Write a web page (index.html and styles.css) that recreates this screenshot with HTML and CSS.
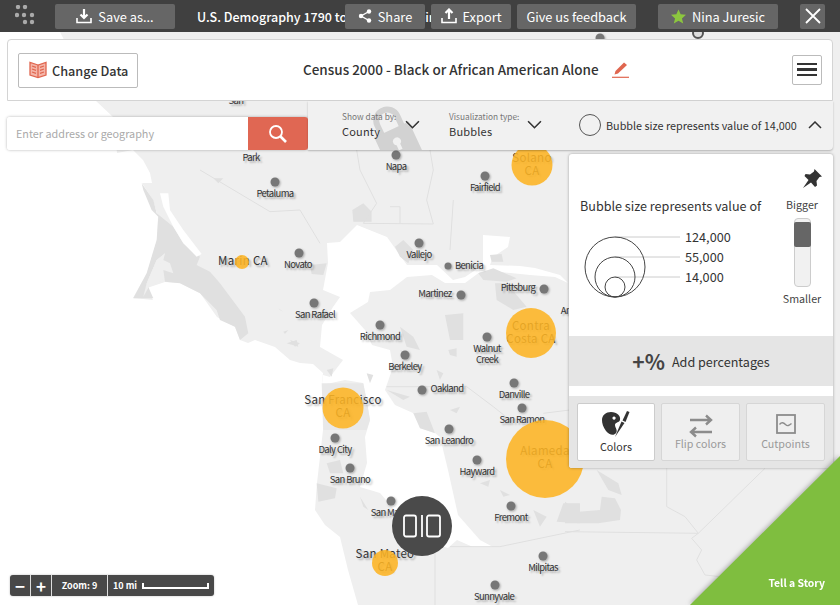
FILE: index.html
```html
<!DOCTYPE html>
<html lang="en">
<head>
    <meta charset="UTF-8">
    <title>Census 2000 - Black or African American Alone</title>
    <link rel="stylesheet" href="styles.css">
</head>
<body>
    <!-- map canvas, same coordinates as the page -->
    <svg class="map" viewBox="0 0 840 605" width="840" height="605">
        <path class="land" d="M60 32 95 100 113 117 117 153 133 150 143 160 150 173 152 183 142 183 153 200 158 217 157 240 147 273 133 298 153 300 147 288 165 282 180 283 200 293 217 317 235 327 240 340 248 343 255 340 275 347 290 360 300 363 313 364 323 373 322 385 323 430 317 483 315 510 325 525 340 537 348 570 358 605 840 605 840 32Z"/>
        <path class="water" d="M327 243 340 242 357 225 387 237 407 265 407 277 390 290 370 292 368 302 350 313 365 330 372 345 390 350 393 367 385 390 395 405 413 413 425 425 440 437 448 470 458 515 480 540 493 547 473 547 457 540 448 548 420 540 380 493 360 487 367 463 365 437 370 420 363 383 345 380 322 385 323 375 330 377 343 360 320 347 322 325 333 307 340 297 323 290 328 263Z"/>
        <path class="water" d="M407 265 437 265 453 280 465 277 483 265 483 235 510 237 508 247 493 257 490 265 520 266 535 268 560 275 568 283 555 277 530 275 500 272 480 272 465 283 445 283 432 275 407 277Z"/>

        <!-- Point Reyes, zoomed coordinates -->
        <g transform="translate(0 150) scale(.3333)">
            <path class="urban" d="M425 100 460 150 470 190 520 230 550 280 600 320 590 345 630 365 660 400 735 500 745 550 720 570 705 530 660 510 650 480 600 430 540 400 495 395 490 360 520 370 510 340 490 330 495 310 470 330 440 400 460 445 400 445 440 370 470 270 475 200 455 180 430 120Z"/>
            <path class="land" d="M495 310 470 330 440 400 430 440 450 405 490 392 470 360 485 335Z"/>
            <path class="water" d="M480 130 505 130 510 180 550 240 605 312 590 320 550 280 520 230 490 170Z"/>
            <path class="urban" d="M835 475 850 485 840 480ZM850 545 865 540 855 552ZM860 580 890 570 895 590Z"/>
        </g>
        <!-- north bay -->
        <g transform="translate(200 150) scale(.3333)">
            <path class="urban" d="M457 180 490 160 515 185 515 215 460 215ZM585 290 610 270 640 300 625 340 600 320ZM835 370 880 355 950 385 920 395 850 390ZM885 400 920 400 980 470 940 480 890 450ZM735 495 790 490 790 570 750 570ZM40 85 70 85 55 100ZM870 315 905 312 910 335 875 335ZM600 530 640 560 660 600 620 590ZM330 345 380 340 370 375 335 372Z"/>
            <path class="border" d="M0 60 210 185 300 180 360 280M470 0 480 60 530 160 490 220 700 222 680 150 700 60 690 0M760 150 750 300M600 220 600 170 570 170"/>
        </g>
        <!-- central and south bay -->
        <g transform="translate(280 340) scale(.3333)">
            <path class="city-limit" d="M125 130 250 130 262 190 270 240 260 270 130 270Z"/>
            <path class="urban" d="M400 220 440 215 465 280 420 265ZM850 490 900 490 900 550 830 545ZM760 510 800 530 780 560ZM110 430 170 445 165 475 115 485ZM140 370 180 360 190 400 150 400ZM510 210 540 200 530 220ZM240 470 265 510 250 500ZM660 450 690 465 670 470ZM505 30 530 25 530 50 510 45ZM140 90 160 85 155 110ZM30 0 60 10 45 20ZM260 100 280 105 270 130ZM320 150 390 170 370 180ZM600 430 630 420 625 440ZM360 30 390 40 380 60ZM470 90 490 100 480 120Z"/>
            <path class="border" d="M465 640 465 795M510 620 660 620 900 570M320 140 560 140 640 200 690 240M790 220 870 210"/>
        </g>
        <!-- south east -->
        <g transform="translate(565 320) scale(.3333)">
            <path class="urban" d="M95 450 160 490 170 525 130 510ZM0 545 40 575 105 570 110 530 150 535 168 570 165 600 100 610 30 610 0 610Z"/>
            <path class="border" d="M305 445 305 560 360 590 400 640 0 635M400 640 600 445M400 640 380 655 410 690 395 720 420 765 465 770"/>
        </g>

        <!-- cities -->
        <g class="cities">
            <text class="city" x="181" y="46">Sonoma</text>
            <text class="city" x="236" y="104">San</text>
            <text class="city" x="251" y="161">Park</text>
            <circle class="pin" cx="600" cy="38" r="4.500"/>
            <circle class="pin" cx="396" cy="155" r="4.500"/>
            <text class="city" x="396" y="170">Napa</text>
            <circle class="pin" cx="275" cy="182" r="4.500"/>
            <text class="city" x="275" y="197">Petaluma</text>
            <circle class="pin" cx="485" cy="176" r="4.500"/>
            <text class="city" x="485" y="191">Fairfield</text>
            <circle class="pin" cx="299" cy="253" r="4.500"/>
            <text class="city" x="298" y="268">Novato</text>
            <circle class="pin" cx="419" cy="243" r="4.500"/>
            <text class="city" x="419" y="258">Vallejo</text>
            <circle class="pin" cx="448" cy="266" r="3.500"/>
            <text class="city" x="469" y="269">Benicia</text>
            <circle class="pin" cx="461" cy="295" r="4.500"/>
            <text class="city" x="435" y="297">Martinez</text>
            <circle class="pin" cx="544" cy="289" r="4.500"/>
            <text class="city" x="518" y="291">Pittsburg</text>
            <circle class="pin" cx="314" cy="303" r="4.500"/>
            <text class="city" x="315" y="318">San Rafael</text>
            <circle class="pin" cx="380" cy="325" r="4.500"/>
            <text class="city" x="380" y="340">Richmond</text>
            <text class="city" x="566" y="314">An</text>
            <circle class="pin" cx="487" cy="337" r="4.500"/>
            <text class="city" x="487" y="352">Walnut</text>
            <text class="city" x="487" y="363">Creek</text>
            <circle class="pin" cx="405" cy="355" r="4.500"/>
            <text class="city" x="405" y="370">Berkeley</text>
            <circle class="pin" cx="422" cy="390" r="4.500"/>
            <text class="city" x="447" y="392">Oakland</text>
            <circle class="pin" cx="514" cy="383" r="4.500"/>
            <text class="city" x="514" y="398">Danville</text>
            <circle class="pin" cx="522" cy="408" r="4.500"/>
            <text class="city" x="522" y="423">San Ramon</text>
            <circle class="pin" cx="449" cy="429" r="4.500"/>
            <text class="city" x="449" y="444">San Leandro</text>
            <circle class="pin" cx="477" cy="460" r="4.500"/>
            <text class="city" x="477" y="475">Hayward</text>
            <circle class="pin" cx="335" cy="438" r="4.500"/>
            <text class="city" x="335" y="453">Daly City</text>
            <circle class="pin" cx="350" cy="468" r="4.500"/>
            <text class="city" x="350" y="483">San Bruno</text>
            <circle class="pin" cx="391" cy="501" r="4.500"/>
            <text class="city" x="391" y="516">San Mateo</text>
            <circle class="pin" cx="511" cy="506" r="4.500"/>
            <text class="city" x="511" y="521">Fremont</text>
            <circle class="pin" cx="543" cy="556" r="4.500"/>
            <text class="city" x="543" y="571">Milpitas</text>
            <circle class="pin" cx="495" cy="585" r="4.500"/>
            <text class="city" x="494" y="600">Sunnyvale</text>
            <circle class="capital" cx="698" cy="33" r="5"/>
        </g>

        <!-- counties, bubbles go over their labels -->
        <g class="counties">
            <text class="county" x="532" y="162">Solano</text>
            <text class="county" x="532" y="175">CA</text>
            <text class="county" x="243" y="265">Marin CA</text>
            <text class="county" x="531" y="330">Contra</text>
            <text class="county" x="531" y="343">Costa CA</text>
            <text class="county" x="343" y="404">San Francisco</text>
            <text class="county" x="343" y="417">CA</text>
            <text class="county" x="545" y="455">Alameda</text>
            <text class="county" x="545" y="468">CA</text>
            <text class="county" x="385" y="558">San Mateo</text>
            <text class="county" x="385" y="571">CA</text>
        </g>
        <circle class="bubble" cx="532" cy="165" r="20.500"/>
        <circle class="bubble" cx="242" cy="262" r="7"/>
        <circle class="bubble" cx="531" cy="333" r="25"/>
        <circle class="bubble" cx="343" cy="408" r="20.500"/>
        <circle class="bubble" cx="545" cy="459" r="39"/>
        <circle class="bubble" cx="385" cy="563" r="13"/>
    </svg>

    <header class="topbar">
        <button class="dots">
            <svg viewBox="0 0 20 20" width="20" height="20">
                <circle cx="3" cy="2" r="2.200"/><circle cx="10" cy="2" r="2.200"/>
                <circle cx="2" cy="10" r="2.200"/><circle cx="9" cy="10" r="2.200"/><circle cx="17" cy="10" r="2.200"/>
                <circle cx="10" cy="17" r="2.200"/><circle cx="17" cy="17" r="2.200"/>
            </svg>
        </button>
        <button class="bar-btn save">
            <svg class="icon" viewBox="0 0 16 16" width="16" height="16"><path d="M8 1v9M4.500 6.500 8 10l3.500-3.500" fill="none" stroke="#fff" stroke-width="2.200"/><path d="M1 10v4.500h14V10" fill="none" stroke="#fff" stroke-width="1.600"/></svg>
            Save as...
        </button>
        <div class="doc-title">U.S. Demography 1790 to Present: Their</div>
        <button class="bar-btn share">
            <svg class="icon" viewBox="0 0 14 14" width="14" height="14"><path d="M11 2.500 3 7l8 4.500" fill="none" stroke="#fff" stroke-width="1.400"/><circle cx="11" cy="2.500" r="2.200" fill="#fff"/><circle cx="3" cy="7" r="2.200" fill="#fff"/><circle cx="11" cy="11.500" r="2.200" fill="#fff"/></svg>
            Share
        </button>
        <button class="bar-btn export">
            <svg class="icon" viewBox="0 0 16 16" width="16" height="16"><path d="M8 11V2M4.500 5 8 1.500 11.500 5" fill="none" stroke="#fff" stroke-width="2.200"/><path d="M1 10v4.500h14V10" fill="none" stroke="#fff" stroke-width="1.600"/></svg>
            Export
        </button>
        <button class="bar-btn feedback">Give us feedback</button>
        <button class="bar-btn user">
            <svg class="icon" viewBox="0 0 16 16" width="15" height="15"><path fill="#8cc63f" d="M8 .5 10.300 5.700 16 6.200 11.700 10 13 15.500 8 12.600 3 15.500 4.300 10 0 6.200 5.700 5.700Z"/></svg>
            Nina Juresic
        </button>
        <button class="bar-btn close">
            <svg viewBox="0 0 16 16" width="16" height="16"><path d="M1 1 15 15M15 1 1 15" stroke="#fff" stroke-width="1.800"/></svg>
        </button>
    </header>

    <section class="controls">
        <div class="card">
            <button class="change-data">
                <svg viewBox="0 0 18 18" width="18" height="18" fill="none" stroke="#e0664f" stroke-width="1.300">
                    <path d="M9 4 1 1.500v12.500L9 16.500 17 14V1.500Z" fill="#f4b5a8"/>
                    <path d="M9 4v12.500M3 5l4 1.300M3 8l4 1.300M3 11l4 1.300M15 5l-4 1.300M15 8l-4 1.300M15 11l-4 1.300"/>
                </svg>
                Change Data
            </button>
            <h1 class="data-title">Census 2000 - Black or African American Alone</h1>
            <svg class="pencil" viewBox="0 0 17 17" width="17" height="17">
                <path fill="#e0664f" d="M12 1.500 15 4 6 12.500 2.500 13.500 3.500 10Z"/>
                <path stroke="#e0664f" stroke-width="1.200" d="M0 16.300h17"/>
            </svg>
            <button class="menu"><span></span><span></span><span></span></button>
        </div>
        <div class="subrow">
            <form class="search">
                <input class="search-input" placeholder="Enter address or geography">
                <button class="search-btn" type="button">
                    <svg viewBox="0 0 20 20" width="20" height="20" fill="none" stroke="#fff"><circle cx="8" cy="8" r="6" stroke-width="1.800"/><path d="M12.500 12.500 18 18" stroke-width="2.600"/></svg>
                </button>
            </form>
            <div class="options">
                <svg class="lock" viewBox="0 0 44 60" width="44" height="60">
                    <path d="M11 26V14a11 11 0 0 1 22 0v12" fill="none" stroke="#d2d2d2" stroke-width="6"/>
                    <path fill="#d2d2d2" fill-rule="evenodd" d="M3 24h38v36H3ZM22 33a4 4 0 0 0-2 7.500V46h4v-5.500A4 4 0 0 0 22 33Z"/>
                </svg>
                <div class="picker county-pick">
                    <label>Show data by:</label>
                    <span>County</span>
                    <svg class="chev" viewBox="0 0 14 8" width="15" height="9"><path d="M1 1 7 7 13 1" fill="none" stroke="#333" stroke-width="1.500"/></svg>
                </div>
                <div class="picker type-pick">
                    <label>Visualization type:</label>
                    <span>Bubbles</span>
                    <svg class="chev" viewBox="0 0 14 8" width="15" height="9"><path d="M1 1 7 7 13 1" fill="none" stroke="#333" stroke-width="1.500"/></svg>
                </div>
                <div class="bubble-note">
                    <i class="ring"></i>
                    Bubble size represents value of 14,000
                    <svg class="chev-up" viewBox="0 0 14 8" width="14" height="8"><path d="M1 7 7 1 13 7" fill="none" stroke="#333" stroke-width="1.500"/></svg>
                </div>
            </div>
        </div>
    </section>

    <aside class="legend">
        <div class="legend-top">
            <div class="legend-left">
                <h2>Bubble size represents value of</h2>
                <svg class="scale" viewBox="0 0 160 70" width="160" height="70">
                    <path class="leader" d="M35 5H100M35 25H100M35 45H100"/>
                    <circle class="ring-line" cx="35" cy="35" r="30"/>
                    <circle class="ring-line" cx="35" cy="45" r="20"/>
                    <circle class="ring-line" cx="35" cy="55" r="10"/>
                    <text x="105" y="9.500">124,000</text>
                    <text x="105" y="29.500">55,000</text>
                    <text x="105" y="49.500">14,000</text>
                </svg>
            </div>
            <div class="sizer">
                <svg class="pushpin" viewBox="0 0 20 20" width="20" height="20"><path fill="#333" d="M12.500 0 20 7.500 17.500 8 14.500 12 15 16.500 13 18 9 13.500 1 19 6.500 11 2.500 7 3.500 5 8 5.500 12 2.500Z"/></svg>
                <span>Bigger</span>
                <div class="track"><div class="thumb"></div></div>
                <span>Smaller</span>
            </div>
        </div>
        <div class="add-pct"><b>+%</b> Add percentages</div>
        <div class="tools">
            <button class="tool on">
                <svg viewBox="0 0 30 30" width="30" height="30">
                    <path fill="#333" fill-rule="evenodd" d="M10 3C16 3 20 7 19 11 18 14 14 13 14 16 14 19 17 21 15 24 13 27 8 26 5 22 2 18 1 14 1 11 1 6 5 3 10 3ZM13 7.500a1.600 1.600 0 1 0 .1 0Z"/>
                    <path fill="#333" d="M14 28 20.500 12.500 23.500 14Z"/>
                    <path fill="#333" d="M21.500 11.500 26 2 28.500 3 24.500 13Z"/>
                </svg>
                Colors
            </button>
            <button class="tool">
                <svg class="flip" viewBox="0 0 24 24" width="24" height="24" fill="none" stroke="#8c8c8c" stroke-width="2.400"><path d="M1 6h21M17 1.500 22 6l-5 4.500"/><path d="M23 18H2M7 13.500 2 18l5 4.500"/></svg>
                Flip colors
            </button>
            <button class="tool">
                <svg class="cuts" viewBox="0 0 20 20" width="20" height="20" fill="none" stroke="#8c8c8c"><rect x="1" y="1" width="18" height="18" stroke-width="1.800"/><path d="M3.500 10.500c2-2.500 4-2 6 0s3.500 1 6-1" stroke-width="1.400"/></svg>
                Cutpoints
            </button>
        </div>
    </aside>

    <div class="zoombar">
        <button class="zoom-btn">−</button>
        <button class="zoom-btn">+</button>
        <span class="zoom-level">Zoom: 9</span>
        <span class="zoom-scale">10 mi <i class="scale-line"></i></span>
    </div>

    <button class="splitter">
        <svg viewBox="0 0 38 24" width="38" height="24" fill="none" stroke="#fff" stroke-width="1.800">
            <rect x="1" y="1.500" width="12" height="21" rx="2"/>
            <path d="M19 1v22"/>
            <rect x="24" y="1.500" width="13" height="21" rx="2"/>
        </svg>
    </button>

    <div class="story-corner"><a class="story">Tell a Story</a></div>
</body>
</html>
```

FILE: styles.css
```css
* { box-sizing: border-box; }
html, body { margin: 0; height: 100%; }
body {
    position: relative;
    width: 840px;
    height: 605px;
    overflow: hidden;
    background: #fff;
    font-family: "Noto Sans CJK SC", "Noto Sans", sans-serif;
    color: #333;
}
button, input { font-family: inherit; }
button { border: 0; padding: 0; cursor: pointer; }

/* map */
.map { position: absolute; left: 0; top: 0; }
.land { fill: #efefef; }
.water { fill: #fff; }
.urban { fill: #e0e0e0; }
.city-limit { fill: #e8e8e8; }
.border { fill: none; stroke: #e0e0e0; stroke-width: 3; }
.pin { fill: #777; filter: drop-shadow(1px 1px 1px rgba(0,0,0,.3)); }
.capital { fill: #ddd; stroke: #555; stroke-width: 2; }
.city {
    font-size: 9.500px;
    letter-spacing: -.65px;
    text-anchor: middle;
    fill: #333;
    text-shadow: 2px 2px 2px rgba(0,0,0,.3);
}
.county {
    font-size: 11.500px;
    letter-spacing: .3px;
    text-anchor: middle;
    fill: #333;
    text-shadow: 2px 2px 2px rgba(0,0,0,.3);
}
.bubble { fill: rgba(253,180,35,.88); }

/* top bar */
.topbar {
    position: relative;
    height: 32px;
    display: flex;
    align-items: center;
    background: #404040;
}
.dots { display: flex; width: 20px; height: 20px; margin: -2px 0 0 15px; background: none; fill: #aaa; }
.bar-btn {
    display: flex;
    align-items: center;
    justify-content: center;
    gap: 6px;
    height: 25px;
    flex: none;
    border-radius: 2px;
    background: #666;
    color: #fff;
    font-size: 12.800px;
}
.save { width: 120px; margin-left: 20px; }
.doc-title {
    width: 234px;
    margin-left: 22px;
    margin-right: -86px;
    flex: none;
    white-space: nowrap;
    color: #fff;
    font-size: 12.500px;
    font-weight: 500;
}
.share { position: relative; width: 80px; }
.export { position: relative; width: 80px; margin-left: 6px; }
.feedback { width: 119px; margin-left: 6px; }
.user { width: 120px; margin-left: 22px; }
.close { width: 25px; margin-left: 22px; }

/* data card and filters */
.controls { position: absolute; left: 7px; top: 39px; width: 826px; }
.card {
    display: flex;
    align-items: center;
    height: 62px;
    padding: 0 10px 0 10px;
    background: #fff;
    border: 1px solid #d4d4d4;
    border-radius: 4px 4px 0 0;
}
.change-data {
    display: flex;
    align-items: center;
    gap: 5px;
    width: 120px;
    height: 35px;
    padding-left: 10px;
    background: #fff;
    border: 1px solid #bbb;
    border-radius: 2px;
    color: #333;
    font-size: 12.700px;
    font-weight: 500;
}
.data-title {
    margin: -3px 0 0 165px;
    font-size: 13.500px;
    font-weight: 500;
    white-space: nowrap;
}
.pencil { margin: -2px 0 0 13px; }
.menu {
    display: flex;
    flex-direction: column;
    justify-content: center;
    gap: 3px;
    width: 30px;
    height: 30px;
    margin: -1px 0 0 auto;
    padding: 0 4px;
    background: #fff;
    border: 1px solid #bbb;
    border-radius: 2px;
}
.menu span { height: 2.500px; background: #333; }

.subrow { display: flex; align-items: flex-start; }
.search {
    display: flex;
    width: 301px;
    height: 33px;
    margin: 16px 0 0;
    box-shadow: 0 0 3px rgba(0,0,0,.3);
    border-radius: 3px;
}
.search-input {
    flex: 1;
    min-width: 0;
    padding: 0 9px 2px;
    background: #fff;
    border: 0;
    border-radius: 3px 0 0 3px;
    font-size: 10.800px;
}
.search-input::placeholder { color: #aaa; opacity: 1; }
.search-btn {
    display: flex;
    align-items: center;
    justify-content: center;
    width: 60px;
    background: #e06753;
    border-radius: 0 3px 3px 0;
}
.options {
    position: relative;
    flex: 1;
    display: flex;
    height: 49px;
    overflow: hidden;
    background: #f1f1f1;
    border-radius: 0 0 4px 0;
    box-shadow: 0 1px 2px rgba(0,0,0,.25);
}
.lock { position: absolute; left: 64px; top: 4px; transform: rotate(-25deg); }
.picker { position: relative; flex: none; width: 134px; padding: 9px 0 0 34px; }
.type-pick { width: 137px; padding-left: 7px; }
.picker label { display: block; font-size: 8.300px; line-height: 12px; color: #777; white-space: nowrap; }
.picker span { display: block; margin-top: 1px; font-size: 11px; line-height: 16px; letter-spacing: .2px; }
.chev { position: absolute; left: 97px; top: 19px; }
.type-pick .chev { left: 85px; }
.bubble-note {
    display: flex;
    align-items: center;
    gap: 5px;
    height: 48px;
    font-size: 10.800px;
    white-space: nowrap;
}
.ring { width: 22px; height: 22px; border: 1px solid #555; border-radius: 50%; }
.chev-up { margin-left: 6px; }

/* bubble legend */
.legend {
    position: absolute;
    left: 569px;
    top: 154px;
    width: 264px;
    height: 314px;
    display: flex;
    flex-direction: column;
    background: #fff;
    border-radius: 3px;
    box-shadow: 0 0 3px rgba(0,0,0,.35);
    overflow: hidden;
}
.legend-top { display: flex; height: 182px; }
.legend-left { width: 211px; padding: 43px 0 0 11px; }
.legend-left h2 { margin: 0; font-size: 12.600px; line-height: 18px; font-weight: 400; white-space: nowrap; }
.scale { display: block; margin: 17px 0 0 0; overflow: visible; }
.scale text { font-size: 12.700px; fill: #333; }
.leader { stroke: #ccc; fill: none; }
.ring-line { fill: none; stroke: #444; }
.sizer { display: flex; flex-direction: column; align-items: center; width: 44px; padding-top: 15px; font-size: 10.700px; line-height: 14px; color: #444; }
.pushpin { margin: 0 0 9px 20px; }
.track { flex: none; width: 17px; height: 69px; margin: 6px 0 5px; padding-top: 3px; background: #f1f1f1; border: 1px solid #ccc; border-radius: 4px; }
.thumb { height: 25px; margin: 0 -1px; background: #666; border-radius: 2px; }
.add-pct {
    display: flex;
    align-items: center;
    justify-content: center;
    gap: 7px;
    height: 50px;
    background: #e5e5e5;
    font-size: 12.600px;
}
.add-pct b { font-size: 21px; line-height: 24px; color: #444; }
.tools {
    display: flex;
    gap: 6px;
    height: 72px;
    margin-top: 10px;
    padding: 7px 7px 0 8px;
    background: #e5e5e5;
}
.tool {
    display: flex;
    flex-direction: column;
    align-items: center;
    justify-content: flex-start;
    width: 79px;
    height: 58px;
    padding-top: 3px;
    background: #efefef;
    border: 1px solid #d6d6d6;
    border-radius: 2px;
    color: #999;
    font-size: 10.700px;
    line-height: 16px;
}
.tool.on { width: 78px; background: #fff; border-color: #ccc; color: #333; }
.tool.on svg { flex: none; margin: 2px 0 0; }
.flip { flex: none; margin: 7px 0 -2px; }
.cuts { flex: none; margin: 7px 0 2px; }

/* zoom control */
.zoombar {
    position: absolute;
    left: 10px;
    top: 575px;
    display: flex;
    width: 204px;
    height: 21px;
    background: #484848;
    border-radius: 3px;
    box-shadow: 0 0 2px rgba(0,0,0,.3);
    color: #fff;
    font-size: 9px;
    font-weight: 700;
    line-height: 21px;
}
.zoom-btn { width: 21px; background: none; border-right: 1px solid #ddd; color: #fff; font-size: 17px; font-weight: 700; line-height: 20px; }
.zoom-level { width: 56px; text-align: center; border-right: 1px solid #ddd; }
.zoom-scale { display: flex; align-items: center; gap: 5px; padding-left: 5px; }
.scale-line { display: block; width: 67px; height: 6px; border: 2px solid #fff; border-top: 0; }

/* compare split handle */
.splitter {
    position: absolute;
    left: 392px;
    top: 496px;
    display: flex;
    align-items: center;
    justify-content: center;
    width: 60px;
    height: 60px;
    background: #4a4a4a;
    border-radius: 50%;
}

/* story corner */
.story-corner {
    position: absolute;
    right: 0;
    bottom: 0;
    filter: drop-shadow(-1px -1px 2px rgba(0,0,0,.25));
}
.story {
    display: block;
    width: 150px;
    height: 149px;
    padding: 119px 15px 0 0;
    background: #7fbe3f;
    clip-path: polygon(100% 0, 100% 100%, 0 100%);
    color: #fff;
    font-size: 10.400px;
    font-weight: 700;
    line-height: 16px;
    text-align: right;
}
```
